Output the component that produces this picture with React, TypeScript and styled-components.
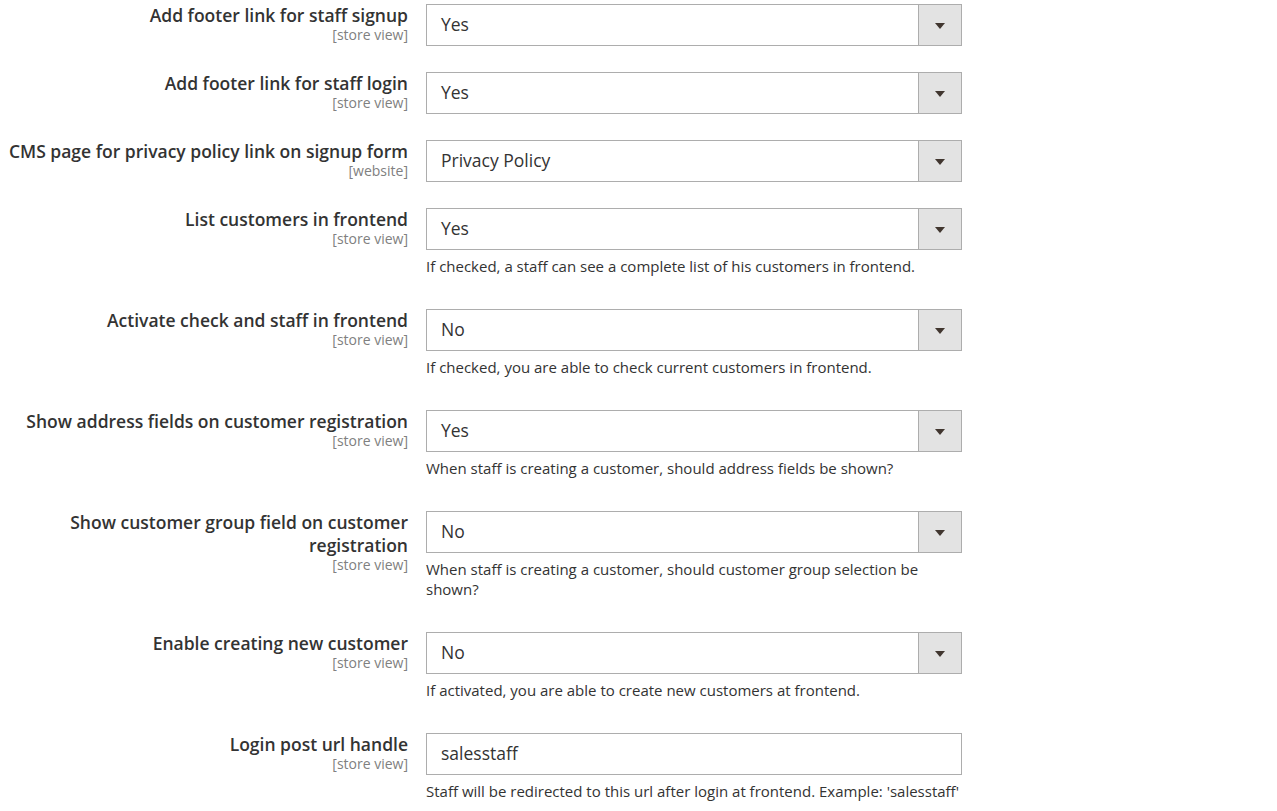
import React from "react";
import styled, { createGlobalStyle } from "styled-components";

const Global = createGlobalStyle`
  html, body { margin: 0; padding: 0; background: #fff; }
  body { font-family: "Open Sans", "Liberation Sans", sans-serif; color: #303030; }
`;

const Page = styled.div`
  padding-top: 4px;
  display: flex;
  flex-direction: column;
  gap: 26px;
`;

const Row = styled.div`
  display: grid;
  grid-template-columns: 408px 536px;
  column-gap: 18px;
  align-items: start;
`;

const LabelCol = styled.div`
  text-align: right;
  display: flex;
  flex-direction: column;
  align-items: flex-end;
`;

const Label = styled.span`
  font-size: 17.5px;
  font-weight: 600;
  line-height: 23px;
  color: #333;
`;

const Scope = styled.span`
  font-size: 14px;
  line-height: 16px;
  color: #808080;
`;

const Control = styled.div`
  display: flex;
  flex-direction: column;
`;

const Box = styled.div`
  box-sizing: border-box;
  height: 42px;
  border: 1px solid #adadad;
  display: flex;
  align-items: stretch;
  background: #fff;
`;

const Value = styled.div`
  flex: 1;
  display: flex;
  align-items: center;
  padding-left: 14px;
  padding-bottom: 3px;
  font-size: 17.5px;
  color: #333;
`;

const Arrow = styled.div`
  width: 42px;
  background: #e3e3e3;
  border-left: 1px solid #adadad;
  display: flex;
  align-items: center;
  justify-content: center;
  &::after {
    content: "";
    border-left: 5px solid transparent;
    border-right: 5px solid transparent;
    border-top: 6px solid #41362f;
    margin-top: 1px;
  }
`;

const Note = styled.div`
  margin-top: 6px;
  margin-bottom: 7px;
  font-size: 15px;
  line-height: 20px;
  color: #333;
`;

type Field = {
  label: string;
  scope: string;
  value: string;
  note?: string;
  input?: boolean;
};

const fields: Field[] = [
  { label: "Add footer link for staff signup", scope: "[store view]", value: "Yes" },
  { label: "Add footer link for staff login", scope: "[store view]", value: "Yes" },
  { label: "CMS page for privacy policy link on signup form", scope: "[website]", value: "Privacy Policy" },
  {
    label: "List customers in frontend",
    scope: "[store view]",
    value: "Yes",
    note: "If checked, a staff can see a complete list of his customers in frontend.",
  },
  {
    label: "Activate check and staff in frontend",
    scope: "[store view]",
    value: "No",
    note: "If checked, you are able to check current customers in frontend.",
  },
  {
    label: "Show address fields on customer registration",
    scope: "[store view]",
    value: "Yes",
    note: "When staff is creating a customer, should address fields be shown?",
  },
  {
    label: "Show customer group field on customer registration",
    scope: "[store view]",
    value: "No",
    note: "When staff is creating a customer, should customer group selection be shown?",
  },
  {
    label: "Enable creating new customer",
    scope: "[store view]",
    value: "No",
    note: "If activated, you are able to create new customers at frontend.",
  },
  {
    label: "Login post url handle",
    scope: "[store view]",
    value: "salesstaff",
    input: true,
    note: "Staff will be redirected to this url after login at frontend. Example: 'salesstaff'",
  },
];

export default function App() {
  return (
    <>
      <Global />
      <Page>
        {fields.map((f) => (
          <Row key={f.label}>
            <LabelCol>
              <Label>{f.label}</Label>
              <Scope>{f.scope}</Scope>
            </LabelCol>
            <Control>
              <Box>
                <Value>{f.value}</Value>
                {!f.input && <Arrow />}
              </Box>
              {f.note && <Note>{f.note}</Note>}
            </Control>
          </Row>
        ))}
      </Page>
    </>
  );
}
